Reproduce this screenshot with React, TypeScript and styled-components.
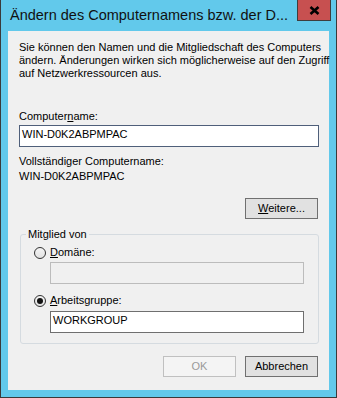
import styled, { createGlobalStyle } from "styled-components";

const GlobalStyle = createGlobalStyle`
  html, body {
    margin: 0;
    padding: 0;
    background: #62c9eb;
  }
  body {
    overflow: hidden;
  }
`;

// Fensterrahmen
const Window = styled.div`
  box-sizing: border-box;
  width: 337px;
  height: 398px;
  display: flex;
  flex-direction: column;
  padding: 0 7px 7px;
  background: #62c9eb;
  border: 1px solid #3a3a3a;
  border-top: none;
  font-family: "Liberation Sans", Arial, sans-serif;
`;

const TitleBar = styled.div`
  height: 31px;
  margin: 0 -7px;
  display: flex;
  justify-content: space-between;
  align-items: flex-start;
`;

const Title = styled.div`
  padding: 6px 0 0 9px;
  font-size: 14.5px;
  line-height: 18px;
  color: #111;
  white-space: nowrap;
`;

const CloseButton = styled.div`
  box-sizing: border-box;
  width: 34px;
  height: 21px;
  margin-right: 5px;
  display: flex;
  align-items: center;
  justify-content: center;
  background: #c75050;
  border: 1px solid #3e3e3e;
  border-top: none;
`;

const Client = styled.div`
  flex: 1;
  display: flex;
  flex-direction: column;
  padding: 10px 10px 0 11px;
  background: #f0f0f0;
  font-size: 11px;
  line-height: 13px;
  color: #000;
`;

const Text = styled.div<{ $top?: number }>`
  margin-top: ${(p) => p.$top ?? 0}px;
  white-space: nowrap;
`;

type FieldTone = "focus" | "normal" | "disabled";

const fieldBorder: Record<FieldTone, string> = {
  focus: "#4f5f7a",
  normal: "#6f6f6f",
  disabled: "#bcbcbc",
};

const Field = styled.div<{ $tone: FieldTone; $top?: number; $left?: number }>`
  box-sizing: border-box;
  height: 22px;
  margin-top: ${(p) => p.$top ?? 0}px;
  margin-left: ${(p) => p.$left ?? 0}px;
  padding: 2px 2px 0;
  border: 1px solid ${(p) => fieldBorder[p.$tone]};
  background: ${(p) => (p.$tone === "disabled" ? "#f0f0f0" : "#fff")};
  white-space: nowrap;
`;

const ButtonRow = styled.div<{ $top?: number }>`
  display: flex;
  justify-content: flex-end;
  gap: 9px;
  margin-top: ${(p) => p.$top ?? 0}px;
  padding-right: 1px;
`;

const Button = styled.button`
  box-sizing: border-box;
  width: 73px;
  height: 21px;
  padding: 0;
  background: #e1e1e1;
  border: 1px solid #707070;
  border-radius: 0;
  font-family: "Liberation Sans", Arial, sans-serif;
  font-size: 11px;
  line-height: 13px;
  color: #000;

  &:disabled {
    background: #f4f4f4;
    border-color: #c0c0c0;
    color: #9a9a9a;
  }
`;

const GroupBox = styled.fieldset`
  margin: 9px 0 0 1px;
  padding: 0;
  border: 1px solid #d5dbe0;
  border-radius: 3px;
  min-inline-size: 0;
`;

const Legend = styled.legend`
  margin-left: 5px;
  padding: 0 2px;
  line-height: 13px;
`;

const GroupBody = styled.div`
  display: flex;
  flex-direction: column;
  padding: 5px 14px 10px 13px;
`;

const RadioRow = styled.div<{ $top?: number }>`
  display: flex;
  align-items: center;
  gap: 4px;
  height: 13px;
  margin-top: ${(p) => p.$top ?? 0}px;
`;

const Radio = styled.span<{ $checked?: boolean }>`
  box-sizing: border-box;
  width: 12px;
  height: 12px;
  border-radius: 50%;
  border: 1px solid #333;
  background: linear-gradient(#f4f4f4, #e2e2e2);
  display: flex;
  align-items: center;
  justify-content: center;

  &::after {
    content: "";
    display: ${(p) => (p.$checked ? "block" : "none")};
    width: 6px;
    height: 6px;
    border-radius: 50%;
    background: #111;
  }
`;

const Key = styled.span`
  text-decoration: underline;
`;

const CloseGlyph = () => (
  <svg width="11" height="9" viewBox="0 0 11 9">
    <path d="M1.5 1 L9.5 8 M9.5 1 L1.5 8" stroke="#000" strokeWidth="2.6" fill="none" />
  </svg>
);

export default function App() {
  return (
    <>
      <GlobalStyle />
      <Window>
        <TitleBar>
          <Title>Ändern des Computernamens bzw. der D...</Title>
          <CloseButton>
            <CloseGlyph />
          </CloseButton>
        </TitleBar>
        <Client>
          <Text>
            Sie können den Namen und die Mitgliedschaft des Computers
            <br />
            ändern. Änderungen wirken sich möglicherweise auf den Zugriff
            <br />
            auf Netzwerkressourcen aus.
          </Text>

          <Text $top={30}>
            Computer<Key>n</Key>ame:
          </Text>
          <Field $tone="focus" $top={2}>
            WIN-D0K2ABPMPAC
          </Field>

          <Text $top={8}>Vollständiger Computername:</Text>
          <Text $top={2}>WIN-D0K2ABPMPAC</Text>

          <ButtonRow $top={15}>
            <Button>
              <Key>W</Key>eitere...
            </Button>
          </ButtonRow>

          <GroupBox>
            <Legend>Mitglied von</Legend>
            <GroupBody>
              <RadioRow>
                <Radio />
                <span>
                  <Key>D</Key>omäne:
                </span>
              </RadioRow>
              <Field $tone="disabled" $top={3} $left={16} />

              <RadioRow $top={10}>
                <Radio $checked />
                <span>
                  <Key>A</Key>rbeitsgruppe:
                </span>
              </RadioRow>
              <Field $tone="normal" $top={4} $left={16}>
                WORKGROUP
              </Field>
            </GroupBody>
          </GroupBox>

          <ButtonRow $top={12}>
            <Button disabled>OK</Button>
            <Button>Abbrechen</Button>
          </ButtonRow>
        </Client>
      </Window>
    </>
  );
}
